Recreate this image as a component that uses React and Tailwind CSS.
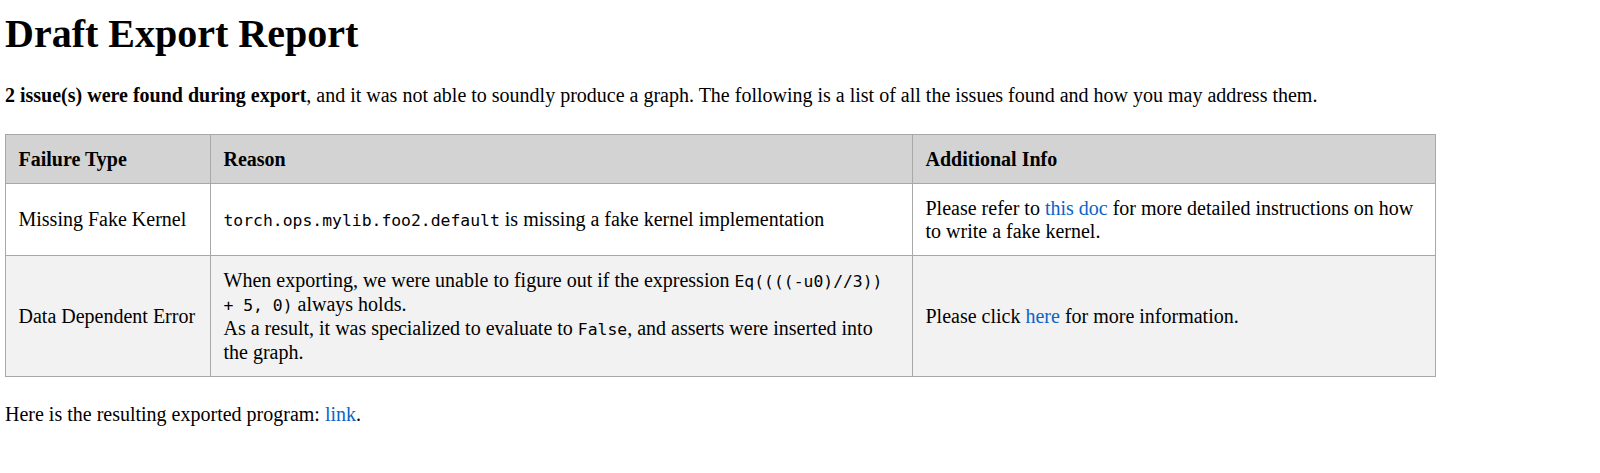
import React from 'react';

const rows = [
  {
    type: 'Missing Fake Kernel',
    reason: (
      <>
        <code className="font-['DejaVu_Sans_Mono',monospace] text-[16.4px]">torch.ops.mylib.foo2.default</code> is missing a fake kernel implementation
      </>
    ),
    info: (
      <>
        Please refer to <a href="#" className="text-[#0a64c8]">this doc</a> for more detailed instructions on how to write a fake kernel.
      </>
    ),
    bg: 'bg-white',
  },
  {
    type: 'Data Dependent Error',
    reason: (
      <>
        When exporting, we were unable to figure out if the expression{' '}
        <code className="font-['DejaVu_Sans_Mono',monospace] text-[16.4px]">Eq((((-u0)//3)) + 5, 0)</code> always holds.
        <br />
        As a result, it was specialized to evaluate to{' '}
        <code className="font-['DejaVu_Sans_Mono',monospace] text-[16.4px]">False</code>, and asserts were inserted into the graph.
      </>
    ),
    info: (
      <>
        Please click <a href="#" className="text-[#0a64c8]">here</a> for more information.
      </>
    ),
    bg: 'bg-[#f2f2f2]',
  },
];

export default function App() {
  return (
    <div className="min-h-[473px] bg-white px-[5px] pt-[11px] font-['Liberation_Serif',serif] text-[20px] leading-[23px] text-black">
      {/* Title */}
      <h1 className="text-[40px] font-bold leading-[46px]">Draft Export Report</h1>

      <p className="mt-[26.5px]">
        <b>2 issue(s) were found during export</b>, and it was not able to soundly produce a graph. The following is a list of all the issues found and how you may address them.
      </p>

      {/* Issues table */}
      <table className="mt-[27.5px] w-[1430px] table-fixed border-collapse">
        <colgroup>
          <col className="w-[205px]" />
          <col className="w-[702px]" />
          <col className="w-[523px]" />
        </colgroup>
        <thead>
          <tr className="bg-[#d3d3d3]">
            <th className="border border-[#a8a8a8] p-[12.5px] text-left font-bold">Failure Type</th>
            <th className="border border-[#a8a8a8] p-[12.5px] text-left font-bold">Reason</th>
            <th className="border border-[#a8a8a8] p-[12.5px] text-left font-bold">Additional Info</th>
          </tr>
        </thead>
        <tbody>
          {rows.map((r) => (
            <tr key={r.type} className={r.bg}>
              <td className="border border-[#a8a8a8] p-[12.5px] align-middle">{r.type}</td>
              <td className="border border-[#a8a8a8] p-[12.5px] align-middle">{r.reason}</td>
              <td className="border border-[#a8a8a8] p-[12.5px] align-middle">{r.info}</td>
            </tr>
          ))}
        </tbody>
      </table>

      <p className="mt-[25.5px]">
        Here is the resulting exported program: <a href="#" className="text-[#0a64c8]">link</a>.
      </p>
    </div>
  );
}
